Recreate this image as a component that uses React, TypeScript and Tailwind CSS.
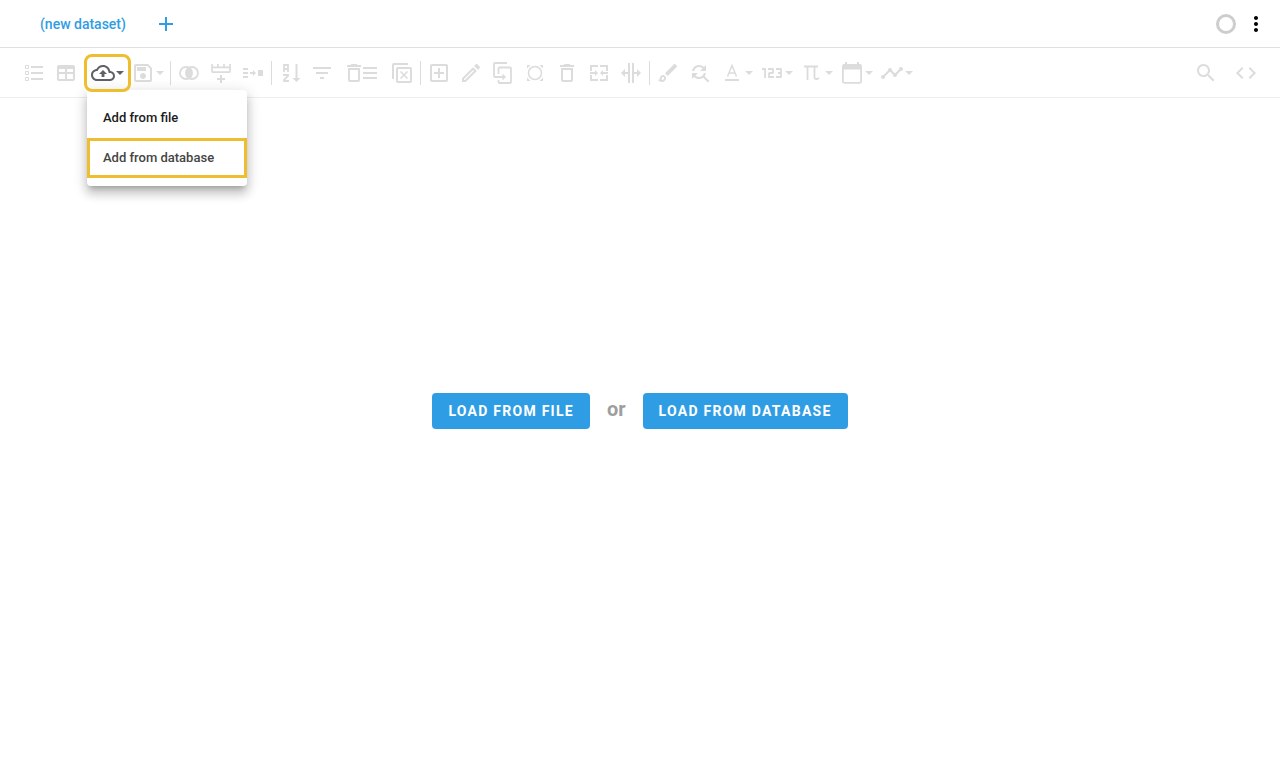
import type { ReactNode } from "react";

type IconProps = { children: ReactNode; width?: number };

function Icon({ children, width = 24 }: IconProps) {
  return (
    <svg
      className="shrink-0"
      width={width}
      height={24}
      viewBox={`0 0 ${width} 24`}
      fill="currentColor"
      aria-hidden="true"
    >
      {children}
    </svg>
  );
}

function Strokes({ d, w = 2 }: { d: string; w?: number }) {
  return <path d={d} fill="none" stroke="currentColor" strokeWidth={w} />;
}

const TRASH =
  "M16 9v10H8V9h8m-1.5-6h-5l-1 1H5v2h14V4h-3.5l-1-1zM18 7H6v12c0 1.1.9 2 2 2h8c1.1 0 2-.9 2-2V7z";

const icons = {
  list: (
    <Icon>
      <Strokes w={1} d="M3.5 4.5h3v3h-3zM3.5 10.5h3v3h-3zM3.5 16.5h3v3h-3z" />
      <path d="M9 5h12v2H9zM9 11h12v2H9zM9 17h12v2H9z" />
    </Icon>
  ),
  table: (
    <Icon>
      <path
        fillRule="evenodd"
        d="M5 4h14a2 2 0 0 1 2 2v12a2 2 0 0 1-2 2H5a2 2 0 0 1-2-2V6a2 2 0 0 1 2-2zM5 8v3h6V8zM13 8v3h6V8zM5 13v5h6v-5zM13 13v5h6v-5z"
      />
    </Icon>
  ),
  cloud: (
    <Icon>
      <path d="M19.35 10.04C18.67 6.59 15.64 4 12 4 9.11 4 6.61 5.64 5.36 8.04 2.34 8.36 0 10.91 0 14c0 3.31 2.69 6 6 6h13c2.76 0 5-2.24 5-5 0-2.64-2.05-4.78-4.65-4.96zM19 18H6c-2.21 0-4-1.79-4-4 0-2.05 1.53-3.76 3.56-3.97l1.07-.11.5-.95C8.08 7.14 9.94 6 12 6c2.62 0 4.88 1.86 5.39 4.43l.3 1.5 1.53.11c1.56.1 2.78 1.41 2.78 2.96 0 1.65-1.35 3-3 3zM8 13h2.55v3h2.9v-3H16l-4-4z" />
    </Icon>
  ),
  save: (
    <Icon>
      <path d="M17 3H5c-1.11 0-2 .9-2 2v14c0 1.1.89 2 2 2h14c1.1 0 2-.9 2-2V7l-4-4zm2 16H5V5h11.17L19 7.83V19zm-7-7c-1.66 0-3 1.34-3 3s1.34 3 3 3 3-1.34 3-3-1.34-3-3-3zM6 6h9v4H6V6z" />
    </Icon>
  ),
  join: (
    <Icon>
      <circle cx="9" cy="12" r="6" fill="none" stroke="currentColor" strokeWidth="1.8" />
      <circle cx="15" cy="12" r="6" fill="none" stroke="currentColor" strokeWidth="1.8" />
      <path d="M12 6.200a6.500 6.500 0 0 1 0 11.600a6.500 6.500 0 0 1 0-11.600z" />
    </Icon>
  ),
  addRow: (
    <Icon>
      <Strokes w={1.7} d="M3 3v7.2a1 1 0 0 0 1 1h16a1 1 0 0 0 1-1V3M3 6.3h18M9 3v4M15 3v4" />
      <path d="M11 14h2v3h3v2h-3v3h-2v-3H8v-2h3z" />
    </Icon>
  ),
  combine: (
    <Icon>
      <path d="M2 7h5v2H2zM2 11h5v2H2zM2 15h5v2H2zM17 9h5v6h-5zM9 11h3V9l3 3-3 3v-2H9z" />
    </Icon>
  ),
  sort: (
    <Icon>
      <Strokes w={1.8} d="M6 11V4h4v7M6 8h4M5 14h5v1l-4 4v1h5" />
      <path d="M17.500 3h2v14h3l-4 4-4-4h3z" />
    </Icon>
  ),
  filter: (
    <Icon>
      <path d="M10 18h4v-2h-4v2zM3 6v2h18V6H3zm3 7h12v-2H6v2z" />
    </Icon>
  ),
  deleteRows: (
    <Icon width={40}>
      <path d={TRASH} />
      <path d="M21 6h14v2H21zM21 11h14v2H21zM21 16h14v2H21z" />
    </Icon>
  ),
  duplicates: (
    <Icon>
      <Strokes d="M3 18V4a1 1 0 0 1 1-1h14" />
      <rect x="7" y="7" width="14" height="14" rx="1" fill="none" stroke="currentColor" strokeWidth="2" />
      <Strokes w={1.6} d="M10.5 10.5l7 7M17.5 10.5l-7 7" />
    </Icon>
  ),
  add: (
    <Icon>
      <path d="M19 3H5c-1.11 0-2 .9-2 2v14c0 1.1.89 2 2 2h14c1.1 0 2-.9 2-2V5c0-1.1-.9-2-2-2zm0 16H5V5h14v14zm-8-2h2v-4h4v-2h-4V7h-2v4H7v2h4z" />
    </Icon>
  ),
  edit: (
    <Icon>
      <path d="M14.06 9.02l.92.92L5.92 19H5v-.92l9.06-9.06M17.66 3c-.25 0-.51.1-.7.29l-1.83 1.83 3.75 3.75 1.83-1.83c.39-.39.39-1.02 0-1.41l-2.34-2.34c-.2-.2-.45-.29-.71-.29zm-3.6 3.19L3 17.25V21h3.75L17.81 9.94l-3.75-3.75z" />
    </Icon>
  ),
  copyTo: (
    <Icon>
      <Strokes
        w={1.8}
        d="M16 2H4a1 1 0 0 0-1 1v12a1 1 0 0 0 1 1h9M7.500 13V7.500a1 1 0 0 1 1-1H19a1 1 0 0 1 1 1V21a1 1 0 0 1-1 1H8.500a1 1 0 0 1-1-1v-2"
      />
      <path d="M11.500 12.500l3.500 3.500-3.500 3.500z" />
    </Icon>
  ),
  shape: (
    <Icon>
      <circle cx="12" cy="12" r="6.500" fill="none" stroke="currentColor" strokeWidth="1.500" />
      <path d="M4 4h3.500L4 7.500zM20 4v3.500L16.500 4zM4 20v-3.500L7.500 20zM20 20h-3.500l3.500-3.500z" />
    </Icon>
  ),
  trash: (
    <Icon>
      <path d={TRASH} />
    </Icon>
  ),
  merge: (
    <Icon>
      <path d="M5 10H3V4h8v2H5v4zm14 8h-6v2h8v-6h-2v4zM5 18v-4H3v6h8v-2H5zM21 4h-8v2h6v4h2V4zM8 13v2l3-3-3-3v2H3v2h5zm8-2V9l-3 3 3 3v-2h5v-2h-5z" />
    </Icon>
  ),
  split: (
    <Icon>
      <path d="M9 2h2v20H9zM13 2h2v20h-2zM9 11v2H6v3l-4-4 4-4v3zM15 11v2h3v3l4-4-4-4v3z" />
    </Icon>
  ),
  brush: (
    <Icon>
      <path d="M7 16c.55 0 1 .45 1 1 0 1.100-.9 2-2 2-.17 0-.33-.02-.5-.05.31-.55.5-1.210.5-1.950 0-.55.45-1 1-1M18.670 3c-.26 0-.51.1-.71.29L9 12.250 11.750 15l8.960-8.960c.39-.39.39-1.020 0-1.410l-1.340-1.340c-.2-.2-.45-.29-.7-.29zM7 14c-1.660 0-3 1.340-3 3 0 1.310-1.160 2-2 2 .92 1.220 2.490 2 4 2 2.210 0 4-1.790 4-4 0-1.660-1.340-3-3-3z" />
    </Icon>
  ),
  replace: (
    <Icon>
      <path d="M11 6c1.38 0 2.63.56 3.54 1.46L12 10h6V4l-2.05 2.05C14.68 4.78 12.93 4 11 4c-3.53 0-6.43 2.61-6.92 6H6.1c.46-2.28 2.48-4 4.9-4zm5.64 9.14c.66-.9 1.12-1.97 1.28-3.14H15.9c-.46 2.28-2.48 4-4.9 4-1.38 0-2.63-.56-3.54-1.46L10 12H4v6l2.05-2.05C7.32 17.22 9.07 18 11 18c1.55 0 2.98-.51 4.14-1.36L20 21.49 21.49 20l-4.85-4.86z" />
    </Icon>
  ),
  textStyle: (
    <Icon>
      <path d="M5 18h14v2H5z" />
      <Strokes w={1.5} d="M7.500 15.500L12 4.500L16.500 15.500M9 12h6" />
    </Icon>
  ),
  numeric: (
    <Icon>
      <Strokes w={1.8} d="M2 8h3v9M8 8h4.500a.5.5 0 0 1 .5.5V11.500l-.5.5H9.500l-.5.5V16h5M16 8h4.500a.5.5 0 0 1 .5.5v7a.5.5 0 0 1-.5.5H16M18 12h3" />
    </Icon>
  ),
  formula: (
    <Icon>
      <Strokes w={1.8} d="M4 5.500h14M7.500 5.500v13.500M14.500 5.500v11a1.500 1.500 0 0 0 1.500 1.500h1a1.500 1.500 0 0 0 1.500-1.500" />
    </Icon>
  ),
  calendar: (
    <Icon>
      <rect x="2.900" y="3.900" width="18.200" height="18" rx="1.500" fill="none" stroke="currentColor" strokeWidth="1.800" />
      <path d="M3 3h18v5.500h-18zM5 1h2v3H5zM17 1h2v3h-2z" />
    </Icon>
  ),
  chart: (
    <Icon>
      <path d="M23 8c0 1.1-.9 2-2 2-.18 0-.35-.02-.51-.07l-3.56 3.55c.05.16.07.34.07.52 0 1.1-.9 2-2 2s-2-.9-2-2c0-.18.02-.36.07-.52l-2.55-2.55c-.16.05-.34.07-.52.07s-.36-.02-.52-.07l-4.55 4.56c.05.16.07.33.07.51 0 1.1-.9 2-2 2s-2-.9-2-2 .9-2 2-2c.18 0 .35.02.51.07l4.56-4.55C8.02 9.36 8 9.18 8 9c0-1.1.9-2 2-2s2 .9 2 2c0 .18-.02.36-.07.52l2.55 2.55c.16-.05.34-.07.52-.07s.36.02.52.07l3.55-3.56C19.02 8.35 19 8.18 19 8c0-1.1.9-2 2-2s2 .9 2 2z" />
    </Icon>
  ),
  search: (
    <Icon>
      <path d="M15.5 14h-.79l-.28-.27C15.41 12.59 16 11.11 16 9.5 16 5.91 13.09 3 9.5 3S3 5.91 3 9.5 5.91 16 9.5 16c1.61 0 3.09-.59 4.23-1.57l.27.28v.79l5 4.99L20.49 19l-4.99-5zm-6 0C7.01 14 5 11.99 5 9.5S7.01 5 9.5 5 14 7.01 14 9.5 11.99 14 9.5 14z" />
    </Icon>
  ),
  code: (
    <Icon>
      <path d="M9.4 16.6L4.8 12l4.6-4.6L8 6l-6 6 6 6 1.4-1.4zm5.2 0l4.6-4.6-4.6-4.6L16 6l6 6-6 6-1.4-1.4z" />
    </Icon>
  ),
};

type ToolProps = { icon: keyof typeof icons; label: string };

function Tool({ icon, label }: ToolProps) {
  return (
    <button type="button" disabled aria-label={label} className="flex h-8 items-center px-1 text-[#dcdcdc]">
      {icons[icon]}
    </button>
  );
}

function MenuTool({ icon, label, active = false }: ToolProps & { active?: boolean }) {
  return (
    <button
      type="button"
      disabled={!active}
      aria-label={label}
      aria-haspopup="menu"
      className={`flex h-8 w-10 items-center pl-1 ${active ? "text-[#5f6165]" : "text-[#dcdcdc]"}`}
    >
      {icons[icon]}
      <svg className="shrink-0" width="10" height="24" viewBox="0 0 10 24" fill="currentColor" aria-hidden="true">
        <path d="M1 10h8l-4 4z" />
      </svg>
    </button>
  );
}

function Divider() {
  return <div className="mx-0.5 h-6 w-px shrink-0 bg-[#dcdcdc]" />;
}

const MENU_SHADOW =
  "shadow-[0_5px_5px_-3px_rgba(0,0,0,0.2),0_8px_10px_1px_rgba(0,0,0,0.14),0_3px_14px_2px_rgba(0,0,0,0.12)]";

const loadButton =
  "h-9 rounded bg-[#2f9de4] px-4 text-sm font-bold tracking-[0.09em] text-white uppercase";

export default function App() {
  return (
    <div className="flex min-h-screen flex-col bg-white font-[Roboto,sans-serif]">
      <header className="flex h-12 items-center justify-between border-b border-[#e0e0e0] pr-3 pl-10">
        <div className="flex items-center gap-7">
          <a href="#dataset" className="text-sm font-medium text-[#2f9de4]">
            (new dataset)
          </a>
          <button type="button" aria-label="New dataset" className="text-[#2f9de4]">
            <Icon>
              <path d="M19 13h-6v6h-2v-6H5v-2h6V5h2v6h6v2z" />
            </Icon>
          </button>
        </div>
        <div className="flex items-center gap-2">
          <div className="size-5 rounded-full border-3 border-[#cdcdcd]" />
          <button type="button" aria-label="More options" className="text-black">
            <Icon>
              <path d="M12 8c1.100 0 2-.9 2-2s-.9-2-2-2-2 .9-2 2 .9 2 2 2zm0 2c-1.100 0-2 .9-2 2s.9 2 2 2 2-.9 2-2-.9-2-2-2zm0 6c-1.100 0-2 .9-2 2s.9 2 2 2 2-.9 2-2-.9-2-2-2z" />
            </Icon>
          </button>
        </div>
      </header>

      <div className="flex h-[50px] items-center justify-between border-b border-[#eeeeee] px-[18px]">
        <div className="flex items-center">
          <Tool icon="list" label="List view" />
          <Tool icon="table" label="Table view" />
          <div className="ml-[5px] flex pr-px">
            <div className="relative">
              <MenuTool icon="cloud" label="Add data" active />
              <div
                role="menu"
                className={`absolute top-[33px] left-0 z-10 w-40 rounded bg-white py-2 ${MENU_SHADOW}`}
              >
                <button
                  type="button"
                  role="menuitem"
                  className="flex h-10 w-full items-center px-4 text-[13px] font-medium text-[#1c1c1c]"
                >
                  Add from file
                </button>
                <button
                  type="button"
                  role="menuitem"
                  className="flex h-10 w-full items-center border-3 border-[#efbd30] px-[13px] text-[13px] font-medium text-[#444444]"
                >
                  Add from database
                </button>
              </div>
              <div className="pointer-events-none absolute -inset-y-[3px] -right-1 -left-[3px] z-20 rounded-lg border-3 border-[#efbd30]" />
            </div>
            <MenuTool icon="save" label="Save" />
          </div>
          <Divider />
          <Tool icon="join" label="Join" />
          <Tool icon="addRow" label="Append rows" />
          <Tool icon="combine" label="Combine" />
          <Divider />
          <Tool icon="sort" label="Sort" />
          <Tool icon="filter" label="Filter" />
          <Tool icon="deleteRows" label="Delete rows" />
          <Tool icon="duplicates" label="Remove duplicates" />
          <Divider />
          <Tool icon="add" label="Add column" />
          <Tool icon="edit" label="Edit column" />
          <Tool icon="copyTo" label="Duplicate column" />
          <Tool icon="shape" label="Extract" />
          <Tool icon="trash" label="Delete column" />
          <Tool icon="merge" label="Merge columns" />
          <Tool icon="split" label="Split column" />
          <Divider />
          <Tool icon="brush" label="Clean" />
          <Tool icon="replace" label="Find and replace" />
          <MenuTool icon="textStyle" label="Text" />
          <MenuTool icon="numeric" label="Numbers" />
          <MenuTool icon="formula" label="Formula" />
          <MenuTool icon="calendar" label="Dates" />
          <MenuTool icon="chart" label="Charts" />
        </div>
        <div className="flex items-center gap-2">
          <Tool icon="search" label="Search" />
          <Tool icon="code" label="Code" />
        </div>
      </div>

      <main className="flex flex-1 items-center justify-center pb-14">
        <div className="flex items-baseline gap-[17px]">
          <button type="button" className={loadButton}>
            Load from file
          </button>
          <span className="text-xl font-bold text-[#9e9e9e]">or</span>
          <button type="button" className={loadButton}>
            Load from database
          </button>
        </div>
      </main>
    </div>
  );
}
